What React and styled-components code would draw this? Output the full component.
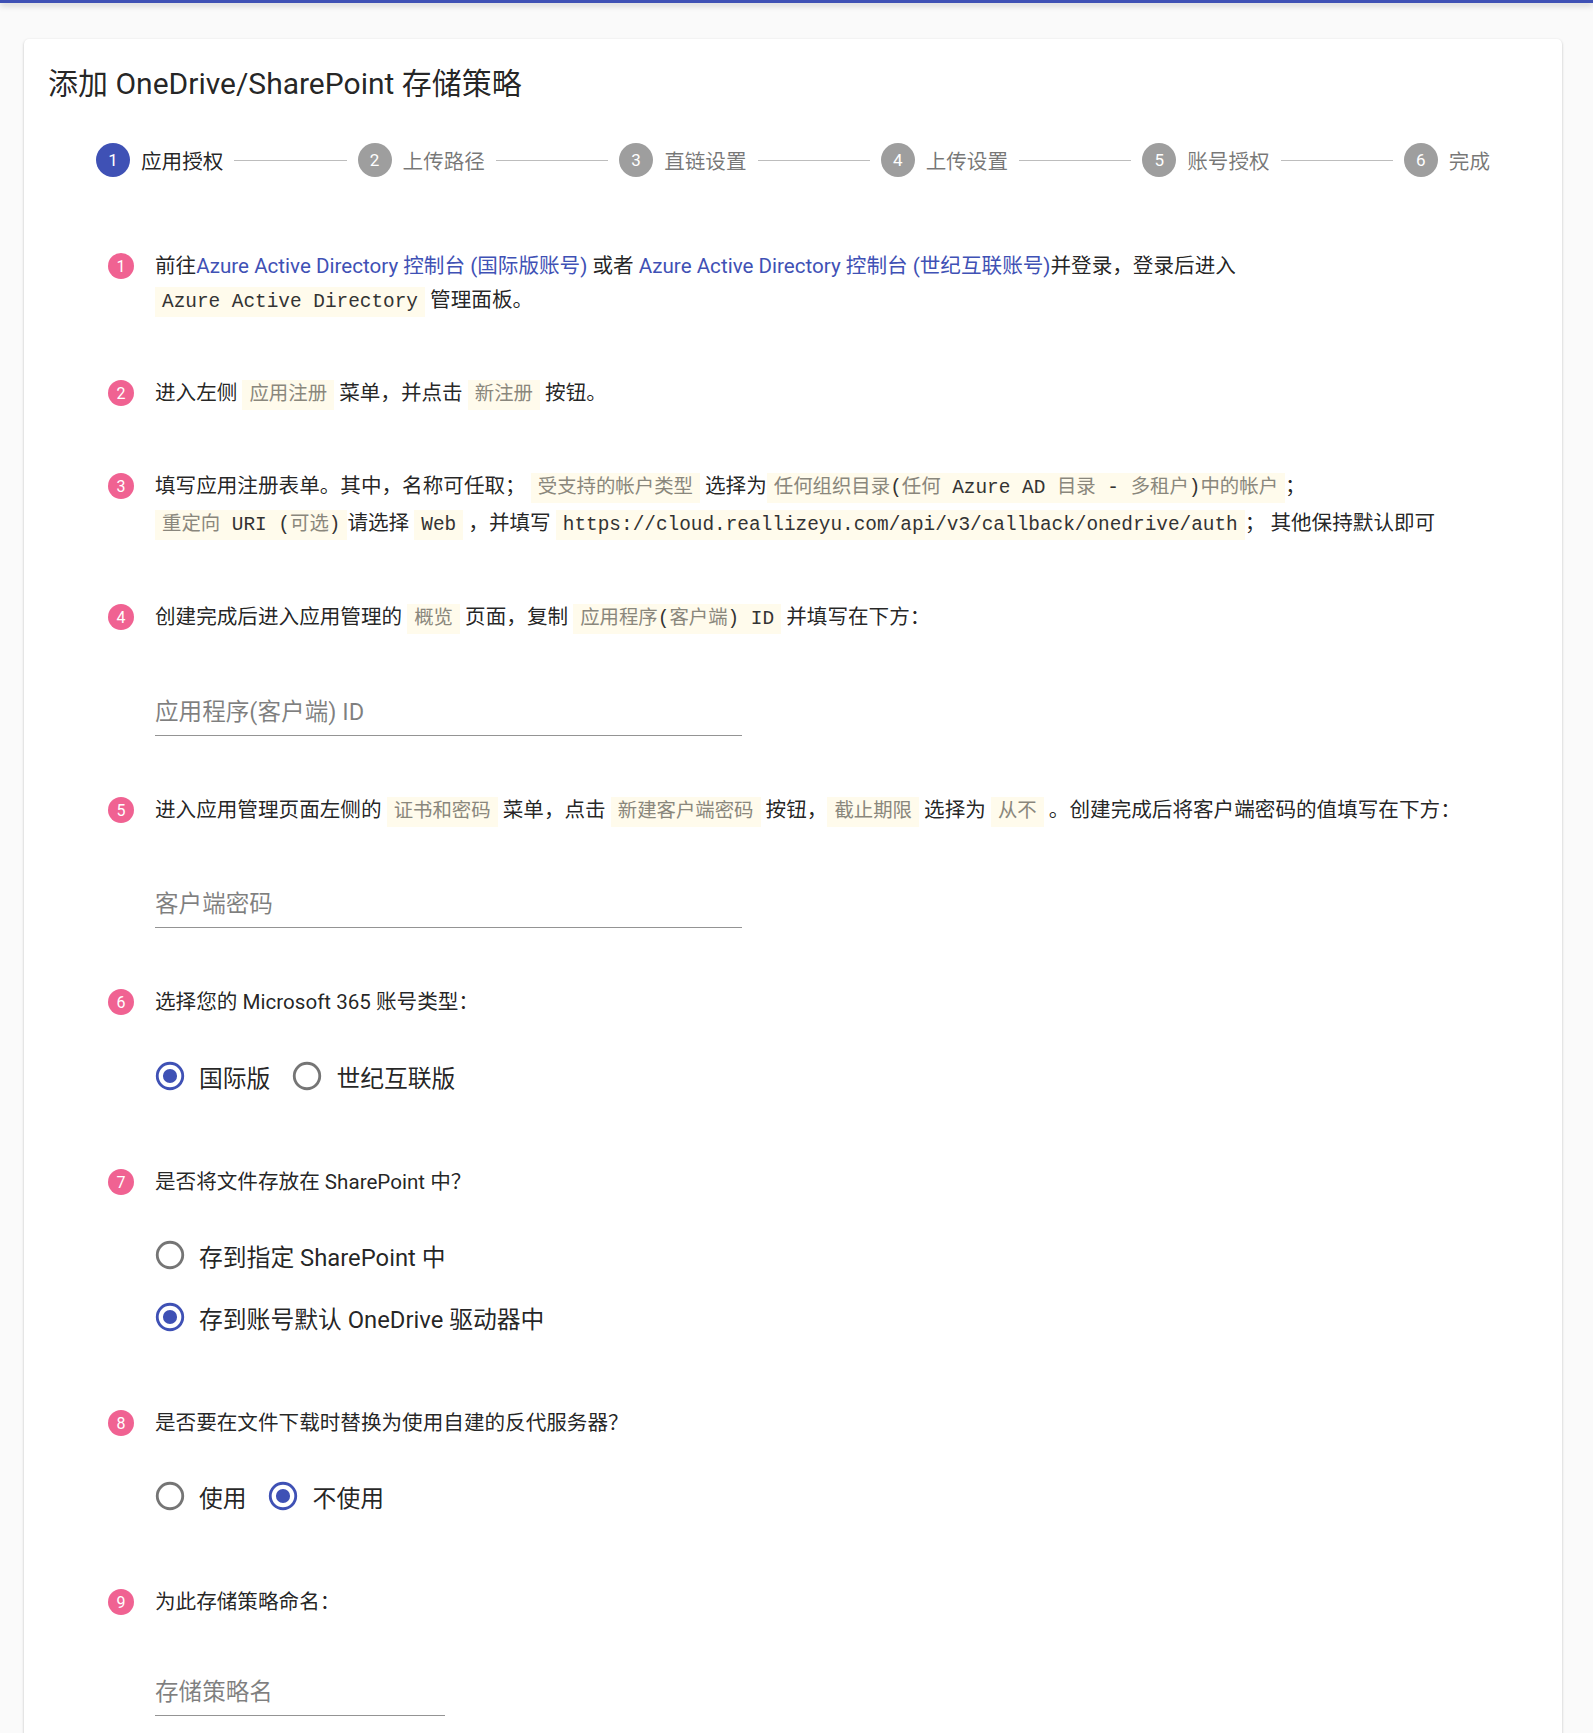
import styled, { createGlobalStyle } from "styled-components";

const GlobalStyle = createGlobalStyle`
  html, body {
    margin: 0;
    padding: 0;
    background: #fafafa;
  }
  body {
    font-family: Roboto, "Noto Sans CJK SC", sans-serif;
    color: rgba(0, 0, 0, 0.87);
  }
`;

const steps = ["应用授权", "上传路径", "直链设置", "上传设置", "账号授权", "完成"];

// split code text so CJK runs get the lighter look of the original
const splitCjk = (text) => text.split(/([\u3000-\u9fff\uff00-\uffef]+)/).filter(Boolean);

const TopBar = styled.div`
  height: 3px;
  background: #3f51b5;
  box-shadow: 0 2px 6px rgba(0, 0, 0, 0.25);
`;

const Card = styled.section`
  margin: 36px 31px 0 24px;
  padding: 22px 24px 120px;
  background: #fff;
  border-radius: 5px;
  box-shadow: 0 1px 3px rgba(0, 0, 0, 0.2), 0 1px 1px rgba(0, 0, 0, 0.14),
    0 2px 1px -1px rgba(0, 0, 0, 0.12);
`;

const Title = styled.h1`
  margin: 0;
  font-size: 30px;
  font-weight: 400;
  line-height: 46px;
  color: rgba(0, 0, 0, 0.87);
`;

const Stepper = styled.div`
  display: flex;
  align-items: center;
  margin: 36px 37px 0;
`;

const Step = styled.div`
  display: flex;
  align-items: center;
  padding: 0 11px;
  flex: none;
`;

const StepIcon = styled.span`
  width: 34px;
  height: 34px;
  border-radius: 50%;
  background: ${(p) => (p.$active ? "#3f51b5" : "#9e9e9e")};
  color: #fff;
  font-size: 17px;
  display: flex;
  align-items: center;
  justify-content: center;
`;

const StepLabel = styled.span`
  padding-left: 11px;
  font-size: 20.6px;
  color: ${(p) => (p.$active ? "rgba(0,0,0,0.87)" : "rgba(0,0,0,0.54)")};
`;

const Connector = styled.span`
  flex: 1;
  border-top: 1.4px solid #bdbdbd;
`;

const Guide = styled.div`
  margin: 72px 70px 0 60px;
`;

const Item = styled.div`
  margin-bottom: 57px;
`;

const ItemHead = styled.div`
  display: flex;
  align-items: flex-start;
  gap: 21px;
`;

const Badge = styled.span`
  flex: none;
  width: 26px;
  height: 26px;
  margin-top: 4px;
  border-radius: 50%;
  background: #f06292;
  color: #fff;
  font-size: 16px;
  display: flex;
  align-items: center;
  justify-content: center;
`;

const ItemText = styled.div`
  flex: 1;
  font-size: 20.6px;
  line-height: ${(p) => p.$lh || 34}px;
  color: rgba(0, 0, 0, 0.87);
`;

const Link = styled.a`
  color: #3f51b5;
  text-decoration: none;
`;

const CodeBox = styled.code`
  font-family: "Liberation Mono", "Noto Sans CJK SC", monospace;
  font-size: 19.4px;
  padding: 4px 7px;
  background: #fffbec;
  color: #333;
  white-space: nowrap;
`;

const Muted = styled.span`
  color: #8a877c;
`;

const Content = styled.div`
  margin-left: 47px;
  margin-top: ${(p) => p.$gap}px;
`;

const Field = styled.input`
  display: block;
  width: ${(p) => p.$width}px;
  box-sizing: border-box;
  padding: 0 0 6px;
  border: none;
  border-bottom: 1.4px solid rgba(0, 0, 0, 0.42);
  outline: none;
  background: transparent;
  font-family: Roboto, "Noto Sans CJK SC", sans-serif;
  font-size: 23.6px;
  line-height: 34px;
  color: rgba(0, 0, 0, 0.87);

  &::placeholder {
    color: rgba(0, 0, 0, 0.5);
  }
`;

const RadioGroup = styled.div`
  display: flex;
  flex-direction: ${(p) => (p.$column ? "column" : "row")};
  align-items: flex-start;
  padding-bottom: 1px;
`;

const Option = styled.label`
  display: flex;
  align-items: center;
  height: 62px;
  margin: 0 22px 0 -15px;
  font-size: 23.8px;
  color: rgba(0, 0, 0, 0.87);
  cursor: pointer;
`;

const RadioBox = styled.span`
  width: 59px;
  height: 59px;
  display: flex;
  align-items: center;
  justify-content: center;
  color: ${(p) => (p.$checked ? "#3f51b5" : "rgba(0,0,0,0.54)")};
`;

const Code = ({ children }) => (
  <CodeBox>
    {splitCjk(children).map((part, i) =>
      /[\u3000-\u9fff\uff00-\uffef]/.test(part) ? <Muted key={i}>{part}</Muted> : part
    )}
  </CodeBox>
);

const Radio = ({ label, checked }) => (
  <Option>
    <RadioBox $checked={checked}>
      <svg width="34" height="34" viewBox="0 0 24 24">
        <circle cx="12" cy="12" r="9" fill="none" stroke="currentColor" strokeWidth="2" />
        {checked && <circle cx="12" cy="12" r="5" fill="currentColor" />}
      </svg>
    </RadioBox>
    {label}
  </Option>
);

const GuideItem = ({ n, lh, children, extra }) => (
  <Item>
    <ItemHead>
      <Badge>{n}</Badge>
      <ItemText $lh={lh}>{children}</ItemText>
    </ItemHead>
    {extra}
  </Item>
);

export default function App() {
  return (
    <>
      <GlobalStyle />
      <TopBar />
      <Card>
        <Title>添加 OneDrive/SharePoint 存储策略</Title>

        <Stepper>
          {steps.map((s, i) => (
            <>
              {i > 0 && <Connector key={"c" + i} />}
              <Step key={s}>
                <StepIcon $active={i === 0}>{i + 1}</StepIcon>
                <StepLabel $active={i === 0}>{s}</StepLabel>
              </Step>
            </>
          ))}
        </Stepper>

        <Guide>
          <GuideItem n={1}>
            前往<Link href="#">Azure Active Directory 控制台 (国际版账号)</Link> 或者{" "}
            <Link href="#">Azure Active Directory 控制台 (世纪互联账号)</Link>并登录，登录后进入{" "}
            <Code>Azure Active Directory</Code> 管理面板。
          </GuideItem>

          <GuideItem n={2}>
            进入左侧 <Code>应用注册</Code> 菜单，并点击 <Code>新注册</Code> 按钮。
          </GuideItem>

          <GuideItem n={3} lh={35}>
            填写应用注册表单。其中，名称可任取； <Code>受支持的帐户类型</Code> 选择为
            <Code>任何组织目录(任何 Azure AD 目录 - 多租户)中的帐户</Code>； <Code>重定向 URI (可选)</Code>
            请选择 <Code>Web</Code> ，并填写{" "}
            <Code>https://cloud.reallizeyu.com/api/v3/callback/onedrive/auth</Code>； 其他保持默认即可
          </GuideItem>

          <GuideItem
            n={4}
            extra={
              <Content $gap={59}>
                <Field $width={587} placeholder="应用程序(客户端) ID" />
              </Content>
            }
          >
            创建完成后进入应用管理的 <Code>概览</Code> 页面，复制 <Code>应用程序(客户端) ID</Code> 并填写在下方：
          </GuideItem>

          <GuideItem
            n={5}
            extra={
              <Content $gap={58}>
                <Field $width={587} placeholder="客户端密码" />
              </Content>
            }
          >
            进入应用管理页面左侧的 <Code>证书和密码</Code> 菜单，点击 <Code>新建客户端密码</Code> 按钮，
            <Code>截止期限</Code> 选择为 <Code>从不</Code> 。创建完成后将客户端密码的值填写在下方：
          </GuideItem>

          <GuideItem
            n={6}
            extra={
              <Content $gap={26}>
                <RadioGroup>
                  <Radio label="国际版" checked />
                  <Radio label="世纪互联版" />
                </RadioGroup>
              </Content>
            }
          >
            选择您的 Microsoft 365 账号类型：
          </GuideItem>

          <GuideItem
            n={7}
            extra={
              <Content $gap={25}>
                <RadioGroup $column>
                  <Radio label="存到指定 SharePoint 中" />
                  <Radio label="存到账号默认 OneDrive 驱动器中" checked />
                </RadioGroup>
              </Content>
            }
          >
            是否将文件存放在 SharePoint 中？
          </GuideItem>

          <GuideItem
            n={8}
            extra={
              <Content $gap={25}>
                <RadioGroup>
                  <Radio label="使用" />
                  <Radio label="不使用" checked />
                </RadioGroup>
              </Content>
            }
          >
            是否要在文件下载时替换为使用自建的反代服务器？
          </GuideItem>

          <GuideItem
            n={9}
            extra={
              <Content $gap={56}>
                <Field $width={290} placeholder="存储策略名" />
              </Content>
            }
          >
            为此存储策略命名：
          </GuideItem>
        </Guide>
      </Card>
    </>
  );
}
